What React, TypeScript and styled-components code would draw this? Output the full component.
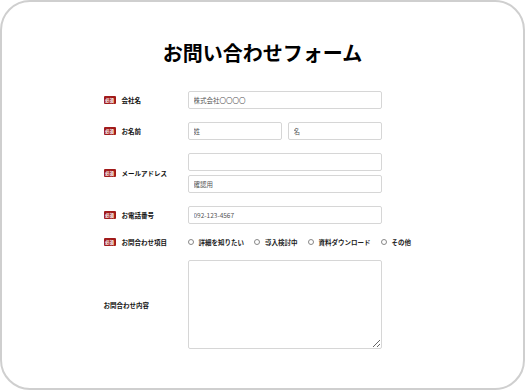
import React from 'react';
import styled, { createGlobalStyle } from 'styled-components';

const GlobalStyle = createGlobalStyle`
  html, body {
    margin: 0;
    padding: 0;
    background: #ffffff;
  }
  body {
    font-family: "Noto Sans CJK JP", "Noto Sans", sans-serif;
    color: #111;
  }
`;

const Frame = styled.div`
  box-sizing: border-box;
  width: 525px;
  height: 390px;
  border: 2px solid #cfcfcf;
  border-radius: 30px;
  background: #fff;
  padding-top: 32px;
  overflow: hidden;
`;

const Title = styled.h1`
  margin: 0 0 19px;
  text-align: center;
  font-size: 20px;
  line-height: 38px;
  font-weight: 700;
  color: #000;
`;

const Form = styled.form`
  width: 318px;
  margin: 0 auto;
  display: flex;
  flex-direction: column;
  gap: 13px;
`;

const Row = styled.div`
  display: grid;
  grid-template-columns: 84px 194px;
  align-items: center;
`;

const Label = styled.div`
  display: flex;
  align-items: center;
  gap: 6px;
  font-size: 6.5px;
  font-weight: 700;
  color: #111;
`;

const Badge = styled.span`
  display: inline-flex;
  align-items: center;
  justify-content: center;
  width: 12px;
  height: 8px;
  border-radius: 1px;
  background: #a11a1a;
  color: #fff;
  font-size: 4.5px;
  font-weight: 700;
  line-height: 1;
`;

const Fields = styled.div<{ $cols?: number }>`
  display: grid;
  grid-template-columns: repeat(${p => p.$cols ?? 1}, 1fr);
  gap: 4px 6px;
`;

const Input = styled.input`
  box-sizing: border-box;
  width: 100%;
  height: 18px;
  margin: 0;
  padding: 0 5px;
  border: 1px solid #d6d6d6;
  border-radius: 2px;
  background: #fff;
  font-family: inherit;
  font-size: 6.5px;
  color: #444;
  &::placeholder {
    color: #555;
  }
`;

const TextArea = styled.textarea`
  box-sizing: border-box;
  display: block;
  width: 100%;
  height: 89px;
  margin: 0;
  padding: 4px 5px;
  border: 1px solid #d6d6d6;
  border-radius: 2px;
  font-family: inherit;
  font-size: 6.5px;
`;

const Radios = styled.div`
  display: flex;
  align-items: center;
  gap: 10px;
  white-space: nowrap;
`;

const RadioItem = styled.label`
  display: flex;
  align-items: center;
  gap: 5px;
  font-size: 6.5px;
  font-weight: 700;
  color: #222;
`;

const RadioDot = styled.span`
  box-sizing: border-box;
  width: 6px;
  height: 6px;
  border: 1px solid #888;
  border-radius: 50%;
`;

const RadioRow = styled(Row)`
  height: 10px;
`;

const options = ['詳細を知りたい', '導入検討中', '資料ダウンロード', 'その他'];

export default function App() {
  return (
    <>
      <GlobalStyle />
      <Frame>
        <Title>お問い合わせフォーム</Title>
        <Form>
          <Row>
            <Label><Badge>必須</Badge>会社名</Label>
            <Fields><Input placeholder="株式会社〇〇〇〇" /></Fields>
          </Row>
          <Row>
            <Label><Badge>必須</Badge>お名前</Label>
            <Fields $cols={2}>
              <Input placeholder="姓" />
              <Input placeholder="名" />
            </Fields>
          </Row>
          <Row>
            <Label><Badge>必須</Badge>メールアドレス</Label>
            <Fields>
              <Input />
              <Input placeholder="確認用" />
            </Fields>
          </Row>
          <Row>
            <Label><Badge>必須</Badge>お電話番号</Label>
            <Fields><Input placeholder="092-123-4567" /></Fields>
          </Row>
          <RadioRow>
            <Label><Badge>必須</Badge>お問合わせ項目</Label>
            <Radios>
              {options.map(o => (
                <RadioItem key={o}><RadioDot />{o}</RadioItem>
              ))}
            </Radios>
          </RadioRow>
          <Row>
            <Label>お問合わせ内容</Label>
            <Fields><TextArea /></Fields>
          </Row>
        </Form>
      </Frame>
    </>
  );
}
